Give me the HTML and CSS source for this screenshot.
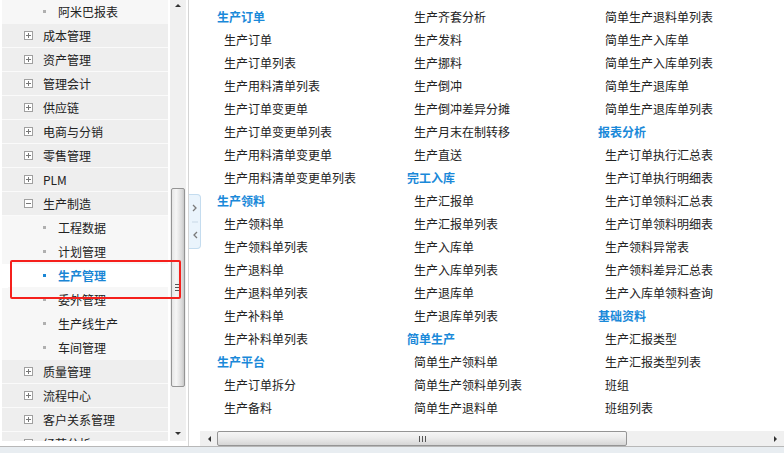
FILE: index.html
```html
<!DOCTYPE html>
<html lang="zh-CN">
<head>
  <meta charset="UTF-8" />
  <title>生产制造</title>
  <link rel="stylesheet" href="styles.css">
</head>
<body>
<div class="app">
  <div class="main">
    <!-- 左侧菜单树 -->
    <div class="sidebar">
      <ul class="tree">
        <li class="node child"><i class="dot"></i>阿米巴报表</li>
        <li class="node top"><svg class="pm" viewBox="0 0 9 9"><rect x="0.5" y="0.5" width="8" height="8" fill="#fff" stroke="#a0a0a0"/><path d="M2 4.5h5M4.5 2v5" stroke="#777"/></svg>成本管理</li>
        <li class="node top"><svg class="pm" viewBox="0 0 9 9"><rect x="0.5" y="0.5" width="8" height="8" fill="#fff" stroke="#a0a0a0"/><path d="M2 4.5h5M4.5 2v5" stroke="#777"/></svg>资产管理</li>
        <li class="node top"><svg class="pm" viewBox="0 0 9 9"><rect x="0.5" y="0.5" width="8" height="8" fill="#fff" stroke="#a0a0a0"/><path d="M2 4.5h5M4.5 2v5" stroke="#777"/></svg>管理会计</li>
        <li class="node top"><svg class="pm" viewBox="0 0 9 9"><rect x="0.5" y="0.5" width="8" height="8" fill="#fff" stroke="#a0a0a0"/><path d="M2 4.5h5M4.5 2v5" stroke="#777"/></svg>供应链</li>
        <li class="node top"><svg class="pm" viewBox="0 0 9 9"><rect x="0.5" y="0.5" width="8" height="8" fill="#fff" stroke="#a0a0a0"/><path d="M2 4.5h5M4.5 2v5" stroke="#777"/></svg>电商与分销</li>
        <li class="node top"><svg class="pm" viewBox="0 0 9 9"><rect x="0.5" y="0.5" width="8" height="8" fill="#fff" stroke="#a0a0a0"/><path d="M2 4.5h5M4.5 2v5" stroke="#777"/></svg>零售管理</li>
        <li class="node top"><svg class="pm" viewBox="0 0 9 9"><rect x="0.5" y="0.5" width="8" height="8" fill="#fff" stroke="#a0a0a0"/><path d="M2 4.5h5M4.5 2v5" stroke="#777"/></svg>PLM</li>
        <li class="node top"><svg class="pm" viewBox="0 0 9 9"><rect x="0.5" y="0.5" width="8" height="8" fill="#fff" stroke="#a0a0a0"/><path d="M2 4.5h5" stroke="#777"/></svg>生产制造</li>
        <li class="node child"><i class="dot"></i>工程数据</li>
        <li class="node child"><i class="dot"></i>计划管理</li>
        <li class="node child active"><i class="dot"></i>生产管理</li>
        <li class="node child"><i class="dot"></i>委外管理</li>
        <li class="node child"><i class="dot"></i>生产线生产</li>
        <li class="node child"><i class="dot"></i>车间管理</li>
        <li class="node top"><svg class="pm" viewBox="0 0 9 9"><rect x="0.5" y="0.5" width="8" height="8" fill="#fff" stroke="#a0a0a0"/><path d="M2 4.5h5M4.5 2v5" stroke="#777"/></svg>质量管理</li>
        <li class="node top"><svg class="pm" viewBox="0 0 9 9"><rect x="0.5" y="0.5" width="8" height="8" fill="#fff" stroke="#a0a0a0"/><path d="M2 4.5h5M4.5 2v5" stroke="#777"/></svg>流程中心</li>
        <li class="node top"><svg class="pm" viewBox="0 0 9 9"><rect x="0.5" y="0.5" width="8" height="8" fill="#fff" stroke="#a0a0a0"/><path d="M2 4.5h5M4.5 2v5" stroke="#777"/></svg>客户关系管理</li>
        <li class="node top"><svg class="pm" viewBox="0 0 9 9"><rect x="0.5" y="0.5" width="8" height="8" fill="#fff" stroke="#a0a0a0"/><path d="M2 4.5h5M4.5 2v5" stroke="#777"/></svg>经营分析</li>
      </ul>
      <div class="vscroll">
        <span class="arrow up"></span>
        <div class="vtrack">
          <div class="vthumb"><span class="grip-h"></span></div>
        </div>
        <span class="arrow down"></span>
      </div>
      <!-- 标注框 -->
      <div class="mark"></div>
    </div>

    <!-- 折叠按钮 -->
    <div class="toggle-col">
      <div class="toggle">
        <svg viewBox="0 0 12 54" width="12" height="54">
          <path d="M4 10l3 3-3 3" fill="none" stroke="#7a7a7a" stroke-width="1.3"/>
          <path d="M3 27h6" stroke="#c8d8e6"/>
          <path d="M8 37l-3 3 3 3" fill="none" stroke="#7a7a7a" stroke-width="1.3"/>
        </svg>
      </div>
    </div>

    <!-- 右侧功能列表 -->
    <div class="content">
      <div class="columns">
        <ul class="col">
          <li class="head">生产订单</li>
          <li>生产订单</li>
          <li>生产订单列表</li>
          <li>生产用料清单列表</li>
          <li>生产订单变更单</li>
          <li>生产订单变更单列表</li>
          <li>生产用料清单变更单</li>
          <li>生产用料清单变更单列表</li>
          <li class="head">生产领料</li>
          <li>生产领料单</li>
          <li>生产领料单列表</li>
          <li>生产退料单</li>
          <li>生产退料单列表</li>
          <li>生产补料单</li>
          <li>生产补料单列表</li>
          <li class="head">生产平台</li>
          <li>生产订单拆分</li>
          <li>生产备料</li>
        </ul>
        <ul class="col">
          <li>生产齐套分析</li>
          <li>生产发料</li>
          <li>生产挪料</li>
          <li>生产倒冲</li>
          <li>生产倒冲差异分摊</li>
          <li>生产月末在制转移</li>
          <li>生产直送</li>
          <li class="head">完工入库</li>
          <li>生产汇报单</li>
          <li>生产汇报单列表</li>
          <li>生产入库单</li>
          <li>生产入库单列表</li>
          <li>生产退库单</li>
          <li>生产退库单列表</li>
          <li class="head">简单生产</li>
          <li>简单生产领料单</li>
          <li>简单生产领料单列表</li>
          <li>简单生产退料单</li>
        </ul>
        <ul class="col">
          <li>简单生产退料单列表</li>
          <li>简单生产入库单</li>
          <li>简单生产入库单列表</li>
          <li>简单生产退库单</li>
          <li>简单生产退库单列表</li>
          <li class="head">报表分析</li>
          <li>生产订单执行汇总表</li>
          <li>生产订单执行明细表</li>
          <li>生产订单领料汇总表</li>
          <li>生产订单领料明细表</li>
          <li>生产领料异常表</li>
          <li>生产领料差异汇总表</li>
          <li>生产入库单领料查询</li>
          <li class="head">基础资料</li>
          <li>生产汇报类型</li>
          <li>生产汇报类型列表</li>
          <li>班组</li>
          <li>班组列表</li>
        </ul>
      </div>
      <div class="hscroll">
        <span class="arrow left"></span>
        <div class="htrack">
          <div class="hthumb"><span class="grip-v"></span></div>
        </div>
        <span class="arrow right"></span>
      </div>
    </div>
  </div>
  <div class="band"></div>
</div>
</body>
</html>
```

FILE: styles.css
```css
body {
  margin: 0;
  padding: 0;
  font-family: "Noto Sans CJK SC", "Liberation Sans", sans-serif;
  font-size: 12px;
  color: #222;
  background: #fff;
}

ul {
  list-style: none;
  margin: 0;
  padding: 0;
}

.app {
  width: 784px;
  height: 453px;
  display: flex;
  flex-direction: column;
  overflow: hidden;
}

.main {
  height: 446px;
  display: flex;
  border-bottom: 1px solid #b8b8b8;
}

/* 左侧菜单 */
.sidebar {
  position: relative;
  width: 188px;
  display: flex;
  border-right: 1px solid #d4d4d4;
  flex-shrink: 0;
}

.tree {
  width: 166px;
  padding-left: 2px;
  margin-right: 2px;
  overflow: hidden;
  height: 441px;
}

.node {
  height: 23px;
  line-height: 23px;
  border-bottom: 1px solid #fafafa;
  display: flex;
  align-items: center;
  white-space: nowrap;
}

.node.top {
  background: #eeeeee;
}

.node.child {
  background: #f7f7f7;
  border-bottom-color: #f7f7f7;
}

.pm {
  width: 9px;
  height: 9px;
  margin-left: 22px;
  margin-right: 10px;
  flex-shrink: 0;
}

.dot {
  display: inline-block;
  width: 3px;
  height: 3px;
  background: #b0b0b0;
  margin-left: 41px;
  margin-right: 12px;
}

.node.active {
  background: #fff;
  color: #1a86d5;
  font-weight: bold;
  margin-left: 6px;
}

.node.active .dot {
  background: #1a86d5;
  margin-left: 35px;
}

.vscroll {
  width: 16px;
  height: 441px;
  background: #f0f0f0;
  display: flex;
  flex-direction: column;
  align-items: center;
}

.vtrack {
  flex: 1;
  width: 100%;
  padding-top: 176px;
}

.vthumb {
  height: 197px;
  margin: 0 1px;
  border: 1px solid #959595;
  border-radius: 2px;
  background: linear-gradient(to right, #e6e6e6, #f6f6f6 35%, #dcdcdc 80%, #c8c8c8);
  display: flex;
  align-items: center;
  justify-content: center;
}

.grip-h {
  width: 6px;
  height: 5px;
  border-top: 1px solid #555;
  border-bottom: 1px solid #555;
  position: relative;
  margin-left: -1px;
}

.grip-h::after {
  content: "";
  position: absolute;
  left: 0;
  right: 0;
  top: 2px;
  border-top: 1px solid #555;
}

.arrow {
  width: 0;
  height: 0;
  flex-shrink: 0;
}

.arrow.up {
  margin: 4px 0 5px;
  border-left: 3px solid transparent;
  border-right: 3px solid transparent;
  border-bottom: 3px solid #333;
}

.arrow.down {
  margin: 5px 0 6px;
  border-left: 3px solid transparent;
  border-right: 3px solid transparent;
  border-top: 3px solid #333;
}

.mark {
  position: absolute;
  left: 10px;
  top: 260px;
  width: 167px;
  height: 35px;
  border: 2px solid #f5201c;
  border-radius: 2px;
}

/* 折叠按钮 */
.toggle-col {
  width: 12px;
  flex-shrink: 0;
}

.toggle {
  margin-top: 194px;
  width: 11px;
  height: 53px;
  background: #eaf4fc;
  border: 1px solid #c4dcef;
  border-left: none;
  border-radius: 0 4px 4px 0;
  overflow: hidden;
}

.toggle svg {
  display: block;
}

/* 右侧列表 */
.content {
  flex: 1;
  display: flex;
  flex-direction: column;
  min-width: 0;
}

.columns {
  flex: 1;
  display: grid;
  grid-template-columns: 190px 191px 1fr;
  padding: 5px 0 0 16px;
}

.col li {
  height: 23px;
  line-height: 23px;
  padding-left: 7px;
  white-space: nowrap;
}

.col li.head {
  padding-left: 0;
  color: #1a89d9;
  font-weight: bold;
}

.hscroll {
  height: 15px;
  background: #f0f0f0;
  display: flex;
  align-items: center;
  margin-left: -1px;
}

.arrow.left {
  margin: 0 6px 0 8px;
  border-top: 3px solid transparent;
  border-bottom: 3px solid transparent;
  border-right: 3px solid #333;
}

.arrow.right {
  margin: 0 7px 0 8px;
  border-top: 3px solid transparent;
  border-bottom: 3px solid transparent;
  border-left: 3px solid #333;
}

.htrack {
  flex: 1;
  height: 15px;
  display: flex;
  align-items: center;
}

.hthumb {
  width: 408px;
  height: 13px;
  border: 1px solid #959595;
  border-radius: 2px;
  background: linear-gradient(to bottom, #f6f6f6, #ececec 45%, #d6d6d6);
  display: flex;
  align-items: center;
  justify-content: center;
}

.grip-v {
  width: 5px;
  height: 6px;
  border-left: 1px solid #555;
  border-right: 1px solid #555;
  position: relative;
}

.grip-v::after {
  content: "";
  position: absolute;
  top: 0;
  bottom: 0;
  left: 2px;
  border-left: 1px solid #555;
}

.band {
  flex: 1;
  background: #e8edf1;
}
```
